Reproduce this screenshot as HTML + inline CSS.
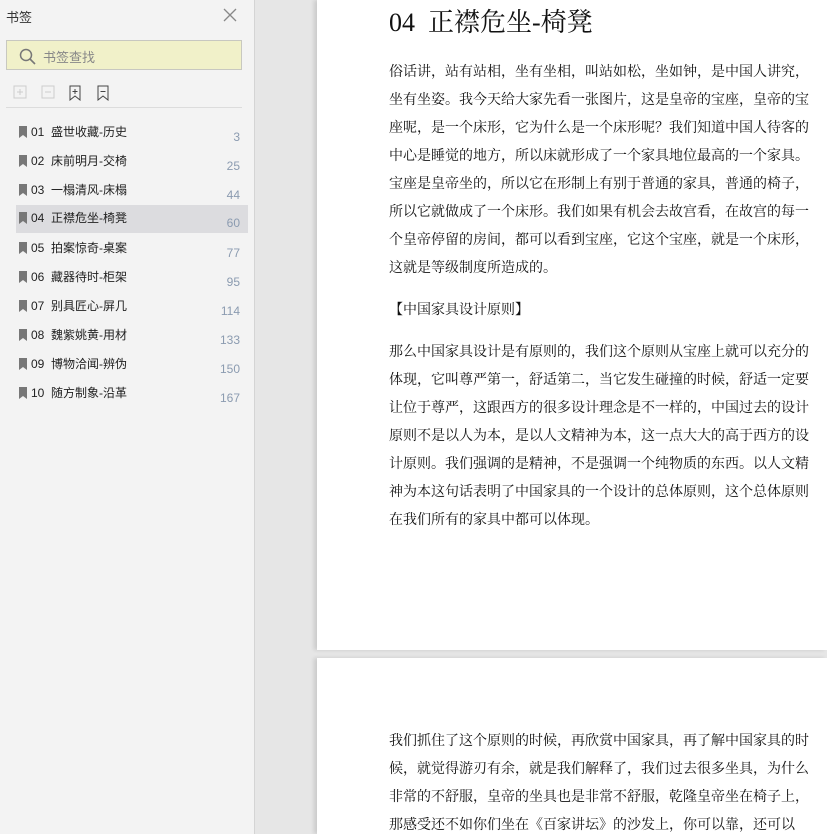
<!DOCTYPE html>
<html style="width:827px;height:834px;overflow:hidden"><head><meta charset="utf-8"><style>
*{margin:0;padding:0;box-sizing:border-box}
body{width:827px;height:834px;overflow:hidden;background:#e6e6e6;position:relative;font-family:"Liberation Sans","Noto Sans CJK SC",sans-serif}
#side{position:absolute;left:0;top:0;width:255px;height:834px;background:#f3f3f3;border-right:1px solid #d4d4d4}
.t{position:absolute;left:6px;top:7px;font-size:13px;color:#333}
.x{position:absolute;left:223px;top:8px}
.search{position:absolute;left:6px;top:40px;width:236px;height:30px;background:#f1f1c9;border:1px solid #c8c8c0}
.search span{position:absolute;left:36px;top:6px;font-size:13px;color:#888}
.tools{position:absolute;left:12px;top:85px}
.hr{position:absolute;left:6px;top:107px;width:236px;height:1px;background:#dcdcdc}
.it{position:absolute;left:16px;width:232px;height:28px;font-size:12px;color:#222}
.it.sel{background:#dcdcdf}
.it .ic{position:absolute;left:2px;top:6px}
.it .n{position:absolute;left:15px;top:4px}
.it .p{position:absolute;right:8px;top:11px;color:#8b9bb0;font-size:12px}
.page{position:absolute;left:317px;width:510px;background:#fff;box-shadow:-3px 0 4px rgba(0,0,0,.12);overflow:hidden}
.tx{position:absolute;left:72px;font-family:"Liberation Serif","Noto Serif CJK SC",serif;font-size:14px;color:#111;white-space:nowrap;letter-spacing:0}
h1{position:absolute;left:72px;top:2px;font-family:"Liberation Serif","Noto Serif CJK SC",serif;font-weight:normal;font-size:26px;color:#111;white-space:nowrap}
</style></head><body>
<div id="side">
<div class="t">书签</div>
<svg class="x" width="14" height="14"><path d="M1 1L13 13M13 1L1 13" stroke="#888" stroke-width="1.3"/></svg>
<div class="search"><svg style="position:absolute;left:12px;top:7px" width="18" height="18"><circle cx="7" cy="7" r="5.5" fill="none" stroke="#777" stroke-width="1.5"/><path d="M11 11L16 16" stroke="#777" stroke-width="1.6"/></svg><span>书签查找</span></div>
<svg class="tools" width="110" height="16"><rect x="2" y="1" width="12" height="12" fill="none" stroke="#ccc"/><path d="M8 4v6M5 7h6" stroke="#ccc"/><rect x="30" y="1" width="12" height="12" fill="none" stroke="#ccc"/><path d="M33 7h6" stroke="#ccc"/><path d="M58 1h10v14l-5-4-5 4z" fill="none" stroke="#444"/><path d="M63 4v5M60.5 6.5h5" stroke="#444"/><path d="M86 1h10v14l-5-4-5 4z" fill="none" stroke="#444"/><path d="M88.5 6.5h5" stroke="#444"/></svg>
<div class="hr"></div>
<div class="it" style="top:119px"><svg class="ic" width="10" height="14"><path d="M1 1h8v12l-4-3-4 3z" fill="#777"/></svg><span class="n">01&nbsp; 盛世收藏-历史</span><span class="p">3</span></div>
<div class="it" style="top:148px"><svg class="ic" width="10" height="14"><path d="M1 1h8v12l-4-3-4 3z" fill="#777"/></svg><span class="n">02&nbsp; 床前明月-交椅</span><span class="p">25</span></div>
<div class="it" style="top:177px"><svg class="ic" width="10" height="14"><path d="M1 1h8v12l-4-3-4 3z" fill="#777"/></svg><span class="n">03&nbsp; 一榻清风-床榻</span><span class="p">44</span></div>
<div class="it sel" style="top:205px"><svg class="ic" width="10" height="14"><path d="M1 1h8v12l-4-3-4 3z" fill="#777"/></svg><span class="n">04&nbsp; 正襟危坐-椅凳</span><span class="p">60</span></div>
<div class="it" style="top:235px"><svg class="ic" width="10" height="14"><path d="M1 1h8v12l-4-3-4 3z" fill="#777"/></svg><span class="n">05&nbsp; 拍案惊奇-桌案</span><span class="p">77</span></div>
<div class="it" style="top:264px"><svg class="ic" width="10" height="14"><path d="M1 1h8v12l-4-3-4 3z" fill="#777"/></svg><span class="n">06&nbsp; 藏器待时-柜架</span><span class="p">95</span></div>
<div class="it" style="top:293px"><svg class="ic" width="10" height="14"><path d="M1 1h8v12l-4-3-4 3z" fill="#777"/></svg><span class="n">07&nbsp; 别具匠心-屏几</span><span class="p">114</span></div>
<div class="it" style="top:322px"><svg class="ic" width="10" height="14"><path d="M1 1h8v12l-4-3-4 3z" fill="#777"/></svg><span class="n">08&nbsp; 魏紫姚黄-用材</span><span class="p">133</span></div>
<div class="it" style="top:351px"><svg class="ic" width="10" height="14"><path d="M1 1h8v12l-4-3-4 3z" fill="#777"/></svg><span class="n">09&nbsp; 博物洽闻-辨伪</span><span class="p">150</span></div>
<div class="it" style="top:380px"><svg class="ic" width="10" height="14"><path d="M1 1h8v12l-4-3-4 3z" fill="#777"/></svg><span class="n">10&nbsp; 随方制象-沿革</span><span class="p">167</span></div>
</div>
<div class="page" style="top:0;height:650px">
<h1>04&nbsp; 正襟危坐-椅凳</h1>
<div class="tx" style="top:61px">俗话讲，站有站相，坐有坐相，叫站如松，坐如钟，是中国人讲究，</div>
<div class="tx" style="top:89px">坐有坐姿。我今天给大家先看一张图片，这是皇帝的宝座，皇帝的宝</div>
<div class="tx" style="top:117px">座呢，是一个床形，它为什么是一个床形呢？我们知道中国人待客的</div>
<div class="tx" style="top:145px">中心是睡觉的地方，所以床就形成了一个家具地位最高的一个家具。</div>
<div class="tx" style="top:173px">宝座是皇帝坐的，所以它在形制上有别于普通的家具，普通的椅子，</div>
<div class="tx" style="top:201px">所以它就做成了一个床形。我们如果有机会去故宫看，在故宫的每一</div>
<div class="tx" style="top:229px">个皇帝停留的房间，都可以看到宝座，它这个宝座，就是一个床形，</div>
<div class="tx" style="top:257px">这就是等级制度所造成的。</div>
<div class="tx" style="top:299px">【中国家具设计原则】</div>
<div class="tx" style="top:341px">那么中国家具设计是有原则的，我们这个原则从宝座上就可以充分的</div>
<div class="tx" style="top:369px">体现，它叫尊严第一，舒适第二，当它发生碰撞的时候，舒适一定要</div>
<div class="tx" style="top:397px">让位于尊严，这跟西方的很多设计理念是不一样的，中国过去的设计</div>
<div class="tx" style="top:425px">原则不是以人为本，是以人文精神为本，这一点大大的高于西方的设</div>
<div class="tx" style="top:453px">计原则。我们强调的是精神，不是强调一个纯物质的东西。以人文精</div>
<div class="tx" style="top:481px">神为本这句话表明了中国家具的一个设计的总体原则，这个总体原则</div>
<div class="tx" style="top:509px">在我们所有的家具中都可以体现。</div>
</div>
<div class="page" style="top:658px;height:176px">
<div class="tx" style="top:72px">我们抓住了这个原则的时候，再欣赏中国家具，再了解中国家具的时</div>
<div class="tx" style="top:100px">候，就觉得游刃有余，就是我们解释了，我们过去很多坐具，为什么</div>
<div class="tx" style="top:128px">非常的不舒服，皇帝的坐具也是非常不舒服，乾隆皇帝坐在椅子上，</div>
<div class="tx" style="top:156px">那感受还不如你们坐在《百家讲坛》的沙发上，你可以靠，还可以</div>
</div>
</body></html>
